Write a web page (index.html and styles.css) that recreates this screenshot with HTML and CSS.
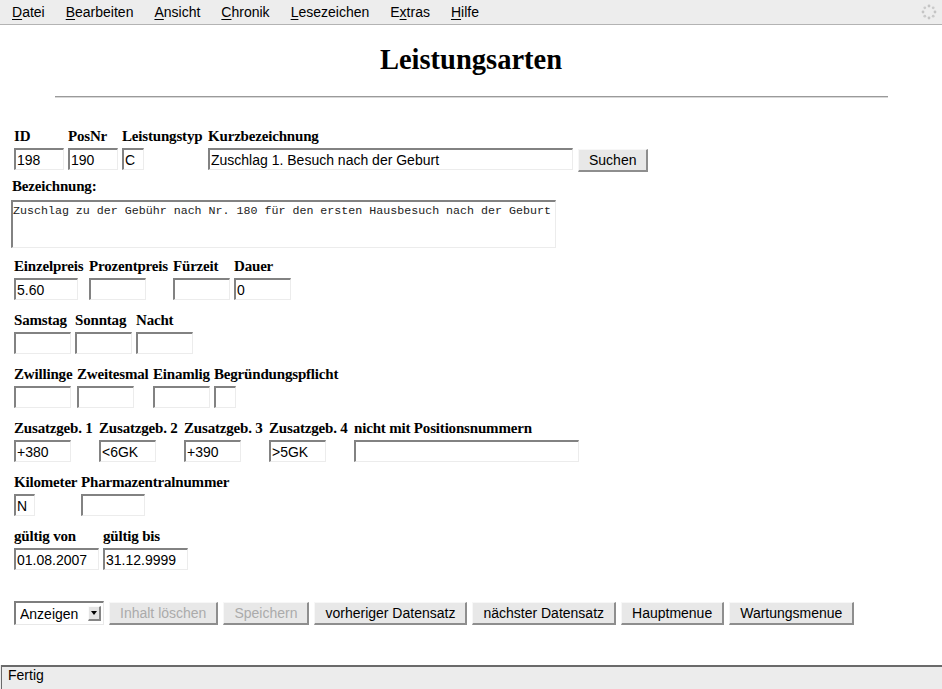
FILE: index.html
```html
<!DOCTYPE html>
<html lang="de">
<head>
<meta charset="utf-8">
<title>Leistungsarten</title>
<link rel="stylesheet" href="styles.css">
</head>
<body>
<div class="menubar">
  <span class="menu"><u>D</u>atei</span>
  <span class="menu"><u>B</u>earbeiten</span>
  <span class="menu"><u>A</u>nsicht</span>
  <span class="menu"><u>C</u>hronik</span>
  <span class="menu"><u>L</u>esezeichen</span>
  <span class="menu">E<u>x</u>tras</span>
  <span class="menu"><u>H</u>ilfe</span>
  <svg class="throbber" width="16" height="16" viewBox="0 0 16 16">
    <circle cx="8" cy="2" r="1.4" fill="#c4c4c4"/>
    <circle cx="12.2" cy="3.8" r="1.4" fill="#cacaca"/>
    <circle cx="14" cy="8" r="1.4" fill="#c4c4c4"/>
    <circle cx="12.2" cy="12.2" r="1.4" fill="#cacaca"/>
    <circle cx="8" cy="14" r="1.4" fill="#c4c4c4"/>
    <circle cx="3.8" cy="12.2" r="1.4" fill="#cacaca"/>
    <circle cx="2" cy="8" r="1.4" fill="#c4c4c4"/>
    <circle cx="3.8" cy="3.8" r="1.4" fill="#cacaca"/>
  </svg>
</div>

<main class="page">
  <h1 class="title">Leistungsarten</h1>
  <hr class="rule">

  <form class="form">
    <div class="row r1">
      <div class="cell"><div class="lbl">ID</div><input class="fld w50" value="198"></div>
      <div class="cell"><div class="lbl">PosNr</div><input class="fld w50" value="190"></div>
      <div class="cell"><div class="lbl">Leistungstyp</div><input class="fld w22" value="C"></div>
      <div class="cell"><div class="lbl">Kurzbezeichnung</div><input class="fld w365" value="Zuschlag 1. Besuch nach der Geburt"></div>
      <div class="cell cell-btn"><button type="button" class="btn">Suchen</button></div>
    </div>

    <div class="desc">
      <div class="lbl desc-lbl">Bezeichnung:</div>
      <textarea class="area">Zuschlag zu der Gebühr nach Nr. 180 für den ersten Hausbesuch nach der Geburt</textarea>
    </div>

    <div class="row r3">
      <div class="cell"><div class="lbl">Einzelpreis</div><input class="fld w64" value="5.60"></div>
      <div class="cell"><div class="lbl">Prozentpreis</div><input class="fld w57" value=""></div>
      <div class="cell"><div class="lbl">Fürzeit</div><input class="fld w57" value=""></div>
      <div class="cell"><div class="lbl">Dauer</div><input class="fld w57" value="0"></div>
    </div>

    <div class="row r4">
      <div class="cell"><div class="lbl">Samstag</div><input class="fld w57" value=""></div>
      <div class="cell"><div class="lbl">Sonntag</div><input class="fld w57" value=""></div>
      <div class="cell"><div class="lbl">Nacht</div><input class="fld w57" value=""></div>
    </div>

    <div class="row r5">
      <div class="cell"><div class="lbl">Zwillinge</div><input class="fld w57" value=""></div>
      <div class="cell"><div class="lbl">Zweitesmal</div><input class="fld w57" value=""></div>
      <div class="cell"><div class="lbl">Einamlig</div><input class="fld w57" value=""></div>
      <div class="cell"><div class="lbl">Begründungspflicht</div><input class="fld w22" value=""></div>
    </div>

    <div class="row r6">
      <div class="cell"><div class="lbl">Zusatzgeb. 1</div><input class="fld w57" value="+380"></div>
      <div class="cell"><div class="lbl">Zusatzgeb. 2</div><input class="fld w57" value="&lt;6GK"></div>
      <div class="cell"><div class="lbl">Zusatzgeb. 3</div><input class="fld w57" value="+390"></div>
      <div class="cell"><div class="lbl">Zusatzgeb. 4</div><input class="fld w57" value="&gt;5GK"></div>
      <div class="cell"><div class="lbl">nicht mit Positionsnummern</div><input class="fld w225" value=""></div>
    </div>

    <div class="row r7">
      <div class="cell"><div class="lbl">Kilometer</div><input class="fld w21" value="N"></div>
      <div class="cell"><div class="lbl">Pharmazentralnummer</div><input class="fld w64" value=""></div>
    </div>

    <div class="row r8">
      <div class="cell"><div class="lbl">gültig von</div><input class="fld w85" value="01.08.2007"></div>
      <div class="cell"><div class="lbl">gültig bis</div><input class="fld w85" value="31.12.9999"></div>
    </div>

    <div class="actions">
      <div class="select">
        <select class="sel"><option>Anzeigen</option></select>
        <span class="sel-arrow"></span>
      </div>
      <button type="button" class="btn" disabled>Inhalt löschen</button>
      <button type="button" class="btn" disabled>Speichern</button>
      <button type="button" class="btn">vorheriger Datensatz</button>
      <button type="button" class="btn">nächster Datensatz</button>
      <button type="button" class="btn">Hauptmenue</button>
      <button type="button" class="btn">Wartungsmenue</button>
    </div>
  </form>
</main>

<div class="status"><div class="status-panel">Fertig</div></div>
</body>
</html>
```

FILE: styles.css
```css
html, body {
  margin: 0;
  padding: 0;
}

body {
  height: 689px;
  display: flex;
  flex-direction: column;
  overflow: hidden;
  background: #ffffff;
  color: #000000;
  font-family: "Liberation Serif", "Times New Roman", serif;
}

/* ---------- menu bar ---------- */
.menubar {
  height: 24px;
  flex: 0 0 auto;
  display: flex;
  align-items: center;
  gap: 21px;
  padding-left: 12px;
  background: #ededed;
  border-bottom: 1px solid #b3b3b3;
  font: 14px/16px "Liberation Sans", Arial, sans-serif;
}

.menu u {
  text-decoration: underline;
  text-underline-offset: 2px;
}

.throbber {
  margin-left: auto;
  margin-right: 5px;
  display: block;
}

/* ---------- page ---------- */
.page {
  flex: 1 1 auto;
  padding: 0 8px;
}

.title {
  margin: 19px 0 0;
  font-size: 28.5px;
  line-height: 32px;
  font-weight: bold;
  text-align: center;
}

.rule {
  width: 833px;
  height: 0;
  margin: 20px auto 0;
  border: 0;
  border-top: 1px solid #9a9a9a;
  border-bottom: 1px solid #d8d8d8;
}

.form {
  margin: 30px 0 0;
  padding-left: 6px;
}

.row {
  display: grid;
  align-items: end;
  margin-bottom: 12px;
}

.r1 { grid-template-columns: 54px 54px 86px 370px auto; margin-bottom: 8px; }
.r3 { grid-template-columns: 75px 84px 61px auto; }
.r4 { grid-template-columns: 61px 61px auto; }
.r5 { grid-template-columns: 63px 76px 61px auto; }
.r6 { grid-template-columns: 85px 85px 85px 85px auto; }
.r7 { grid-template-columns: 67px auto; }
.r8 { grid-template-columns: 89px auto; }

.cell {
  display: flex;
  flex-direction: column;
  align-items: flex-start;
}

.cell-btn {
  margin-bottom: -2px;
}

.lbl {
  font: bold 15px/17px "Liberation Serif", "Times New Roman", serif;
  letter-spacing: -0.18px;
  white-space: nowrap;
  margin-bottom: 3px;
}

.fld {
  display: block;
  box-sizing: border-box;
  height: 22px;
  margin: 0;
  padding: 0 0 0 1px;
  background: #ffffff;
  color: #000000;
  font: 14px "Liberation Sans", Arial, sans-serif;
  border-style: solid;
  border-width: 2px 1px 1px 2px;
  border-color: #828282 #ececec #ececec #828282;
  border-radius: 0;
  outline: none;
}

.w21 { width: 21px; }
.w22 { width: 22px; }
.w50 { width: 50px; }
.w57 { width: 57px; }
.w64 { width: 64px; }
.w85 { width: 85px; }
.w225 { width: 225px; }
.w365 { width: 365px; }

/* ---------- description ---------- */
.desc {
  margin: 0 0 10px -2px;
}

.desc-lbl {
  margin-bottom: 5px;
}

.area {
  display: block;
  box-sizing: border-box;
  width: 545px;
  height: 48px;
  margin: 0 0 0 -1px;
  padding: 2px 0 0 0;
  resize: none;
  overflow: hidden;
  background: #ffffff;
  color: #222222;
  font: 11.65px "Liberation Mono", "Courier New", monospace;
  border-style: solid;
  border-width: 2px 1px 1px 2px;
  border-color: #828282 #ececec #ececec #828282;
  border-radius: 0;
  outline: none;
}

/* ---------- buttons ---------- */
.btn {
  box-sizing: border-box;
  height: 23px;
  margin: 0;
  padding: 0 10px;
  background: #e8e8e8;
  color: #000000;
  font: 14px/18px "Liberation Sans", Arial, sans-serif;
  white-space: nowrap;
  border-style: solid;
  border-width: 1px 2px 2px 1px;
  border-color: #f7f7f7 #8e8e8e #8e8e8e #f7f7f7;
  border-radius: 0;
}

.btn:disabled {
  color: #ababab;
}

.actions {
  display: flex;
  align-items: flex-end;
  gap: 5px;
  margin-top: 31px;
}

.select {
  position: relative;
  display: block;
}

.sel {
  display: block;
  box-sizing: border-box;
  width: 90px;
  height: 24px;
  margin: 0;
  padding: 0 0 0 4px;
  -webkit-appearance: none;
  appearance: none;
  background: #ffffff;
  color: #000000;
  font: 14px "Liberation Sans", Arial, sans-serif;
  border-style: solid;
  border-width: 2px 1px 1px 2px;
  border-color: #7e7e7e #e8e8e8 #e8e8e8 #7e7e7e;
  border-radius: 0;
  outline: none;
}

.sel-arrow {
  position: absolute;
  right: 3px;
  top: 5px;
  width: 13px;
  height: 15px;
  box-sizing: border-box;
  background: #e4e4e4;
  border-style: solid;
  border-width: 1px 2px 2px 1px;
  border-color: #fbfbfb #858585 #858585 #fbfbfb;
  pointer-events: none;
}

.sel-arrow::after {
  content: "";
  position: absolute;
  left: 2px;
  top: 4px;
  border-left: 3px solid transparent;
  border-right: 3px solid transparent;
  border-top: 4px solid #000000;
}

/* ---------- status bar ---------- */
.status {
  flex: 0 0 auto;
  height: 24px;
  padding-left: 1px;
  background: #ececec;
}

.status-panel {
  height: 100%;
  box-sizing: border-box;
  padding-left: 6px;
  border-top: 2px solid #6a6a6a;
  border-left: 1px solid #6a6a6a;
  font: 14px/16px "Liberation Sans", Arial, sans-serif;
}
```
